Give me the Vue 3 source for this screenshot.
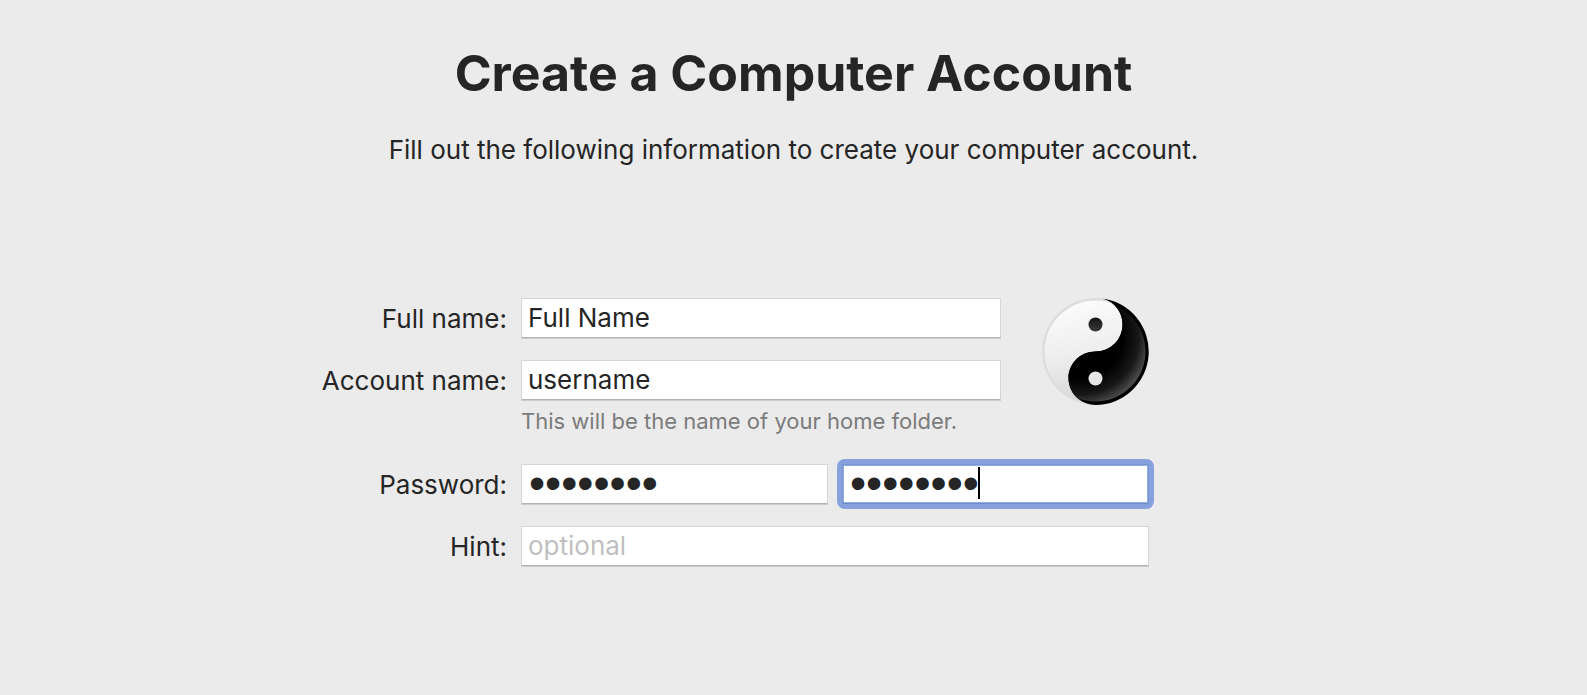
<script setup>
import { ref } from 'vue'

const fullName = ref('Full Name')
const accountName = ref('username')
const password = ref('password')
const verify = ref('password')
const hint = ref('')
</script>

<template>
  <main class="page">
    <header class="intro">
      <h1>Create a Computer Account</h1>
      <p>Fill out the following information to create your computer account.</p>
    </header>

    <form class="account" autocomplete="off" @submit.prevent>
      <div class="identity">
        <div class="names">
          <div class="row">
            <label for="full-name">Full name:</label>
            <input id="full-name" v-model="fullName" class="field" type="text" />
          </div>
          <div class="row">
            <label for="account-name">Account name:</label>
            <input id="account-name" v-model="accountName" class="field" type="text" aria-describedby="account-note" />
          </div>
          <p id="account-note" class="note">This will be the name of your home folder.</p>
        </div>
        <button class="avatar" type="button" aria-label="Account picture">
          <svg viewBox="0.5 0.5 107 107" aria-hidden="true">
            <defs>
              <linearGradient id="light" x1="0.3" y1="0" x2="0.5" y2="1">
                <stop offset="0" stop-color="#fcfcfc" />
                <stop offset="0.5" stop-color="#efeeef" />
                <stop offset="1" stop-color="#d6d4d5" />
              </linearGradient>
              <radialGradient id="sheen" gradientUnits="userSpaceOnUse" cx="40" cy="40" r="68">
                <stop offset="0.6" stop-color="#000" />
                <stop offset="0.84" stop-color="#181818" />
                <stop offset="1" stop-color="#484848" />
              </radialGradient>
              <linearGradient id="pupil" x1="0" y1="0" x2="0" y2="1">
                <stop offset="0" stop-color="#161616" />
                <stop offset="1" stop-color="#3a3a3a" />
              </linearGradient>
              <clipPath id="disc"><circle cx="54" cy="54" r="50" /></clipPath>
            </defs>
            <circle cx="54" cy="54" r="53.5" fill="#dedddd" />
            <circle cx="54" cy="54" r="51" fill="url(#light)" />
            <path d="M61 1 A53.5 53.5 0 0 1 54 107.5 C38 107 27 95 27 80.5 C27 66 39 54 54 54 C69 54 81 42 81 27 C81 15 74 5 61 1 Z" fill="#000" />
            <path clip-path="url(#disc)" d="M61 1 A53.5 53.5 0 0 1 54 107.5 C38 107 27 95 27 80.5 C27 66 39 54 54 54 C69 54 81 42 81 27 C81 15 74 5 61 1 Z" fill="url(#sheen)" />
            <circle cx="54" cy="27" r="7" fill="url(#pupil)" />
            <circle cx="54" cy="81" r="7" fill="#e6e6e6" />
          </svg>
        </button>
      </div>

      <div class="row">
        <label for="password">Password:</label>
        <div class="pair">
          <input id="password" v-model="password" class="field secret" type="password" />
          <div class="focused">
            <input v-model="verify" class="field secret" type="password" aria-label="Verify password" />
            <span class="caret" aria-hidden="true"></span>
          </div>
        </div>
      </div>
      <div class="row">
        <label for="hint">Hint:</label>
        <input id="hint" v-model="hint" class="field" type="text" placeholder="optional" />
      </div>
    </form>
  </main>
</template>

<style>
body {
  margin: 0;
  background: #ebebeb;
}
</style>

<style scoped>
.page {
  box-sizing: border-box;
  min-height: 100vh;
  padding: 41px 20px;
  background: #ebebeb;
  color: #252525;
  font-family: Inter, "Liberation Sans", sans-serif;
  font-size: 26px;
  line-height: 32px;
}
.intro {
  text-align: center;
}
h1 {
  margin: 0;
  font-size: 50px;
  line-height: 64px;
  font-weight: 700;
}
.intro p {
  margin: 29px 0 0;
}
.account {
  box-sizing: border-box;
  display: flex;
  flex-direction: column;
  gap: 22px;
  max-width: 947px;
  margin: 132px auto 0;
  padding-right: 118px;
}
.identity {
  display: flex;
  justify-content: space-between;
  gap: 40px;
}
.names {
  flex: 0 1 681px;
  display: grid;
  row-gap: 22px;
}
.row {
  display: grid;
  grid-template-columns: 187px minmax(0, 1fr);
  column-gap: 14px;
}
label {
  height: 35px;
  padding-top: 5px;
  text-align: right;
  white-space: nowrap;
}
.field {
  box-sizing: border-box;
  display: block;
  width: 100%;
  height: 40px;
  margin: 0;
  padding: 0 6px 1px;
  border: 1px solid #d6d6d6;
  border-bottom-color: #b2b2b2;
  border-radius: 0;
  outline: none;
  box-shadow: 0 1px 0 #cccccc;
  background: #fff;
  color: inherit;
  font: inherit;
}
.field::placeholder {
  color: #bfbfbf;
  opacity: 1;
}
.secret {
  padding-bottom: 3px;
  padding-left: 7px;
  font-family: "Liberation Sans", Arial, sans-serif;
  font-size: 46px;
}
.note {
  margin: -15px 0 7px 201px;
  color: #7b7b7b;
  font-size: 22px;
  line-height: 28px;
}
.avatar {
  flex: none;
  width: 107px;
  height: 107px;
  padding: 0;
  border: 0;
  border-radius: 50%;
  background: none;
}
.avatar svg {
  display: block;
}
.pair {
  display: grid;
  grid-template-columns: 1fr 1fr;
  align-items: start;
  gap: 14px;
}
.focused {
  position: relative;
  border-radius: 3px;
  box-shadow: 0 0 0 5px #87a1dc;
  background: #87a1dc;
}
.focused .field {
  border-color: #7b97d3;
  border-bottom-color: #6f8bc8;
  box-shadow: inset 0 0 0 1px #8fabe9;
  caret-color: transparent;
}
.caret {
  position: absolute;
  top: 3px;
  left: 136px;
  width: 2px;
  height: 32px;
  background: #000;
}
</style>
